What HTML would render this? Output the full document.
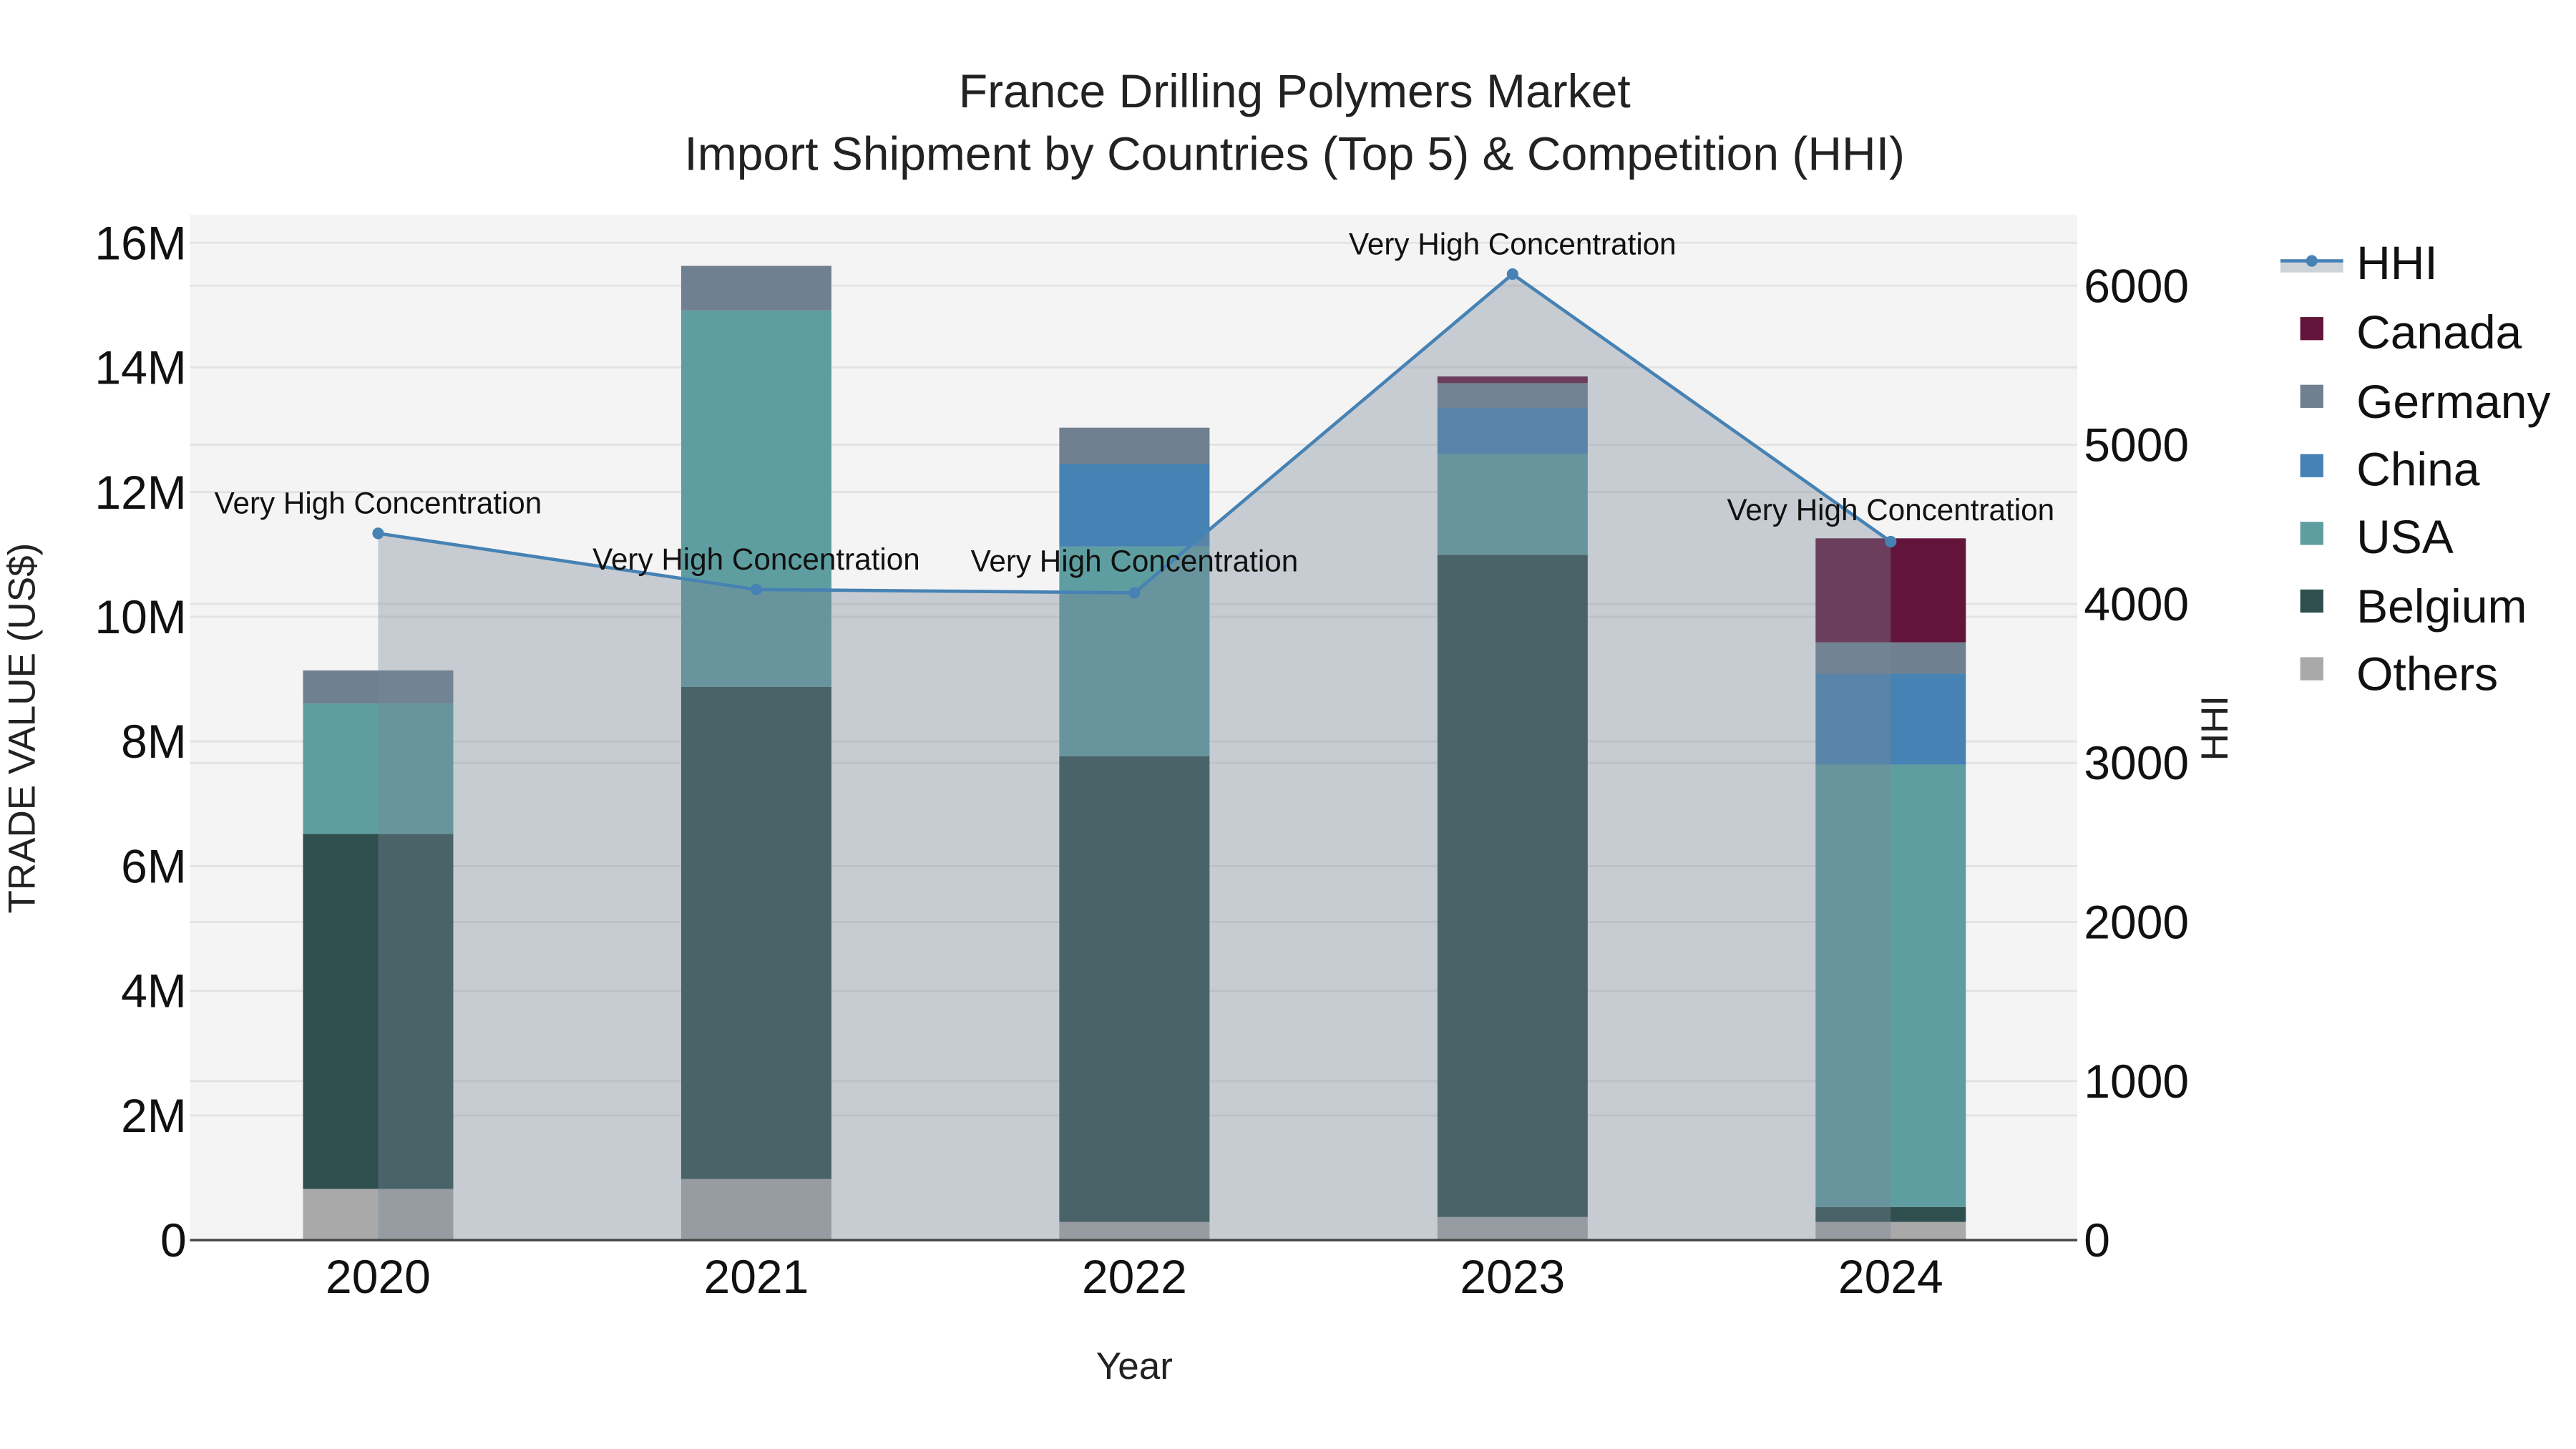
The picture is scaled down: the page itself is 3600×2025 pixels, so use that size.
<!DOCTYPE html>
<html><head><meta charset="utf-8"><style>html,body{margin:0;padding:0;background:#fff}svg{display:block}</style></head>
<body>
<svg width="3600" height="2025" viewBox="0 0 1560 877.5" xmlns="http://www.w3.org/2000/svg" font-family="'Liberation Sans', sans-serif">
<rect x="0" y="0" width="1560" height="877.5" fill="#fff"/>
<rect x="115" y="130" width="1143" height="621" fill="#f4f4f4"/>
<g stroke="#e2e2e2" stroke-width="1.2">
<line x1="115" x2="1258" y1="147" y2="147"/><line x1="115" x2="1258" y1="222.5" y2="222.5"/><line x1="115" x2="1258" y1="298" y2="298"/><line x1="115" x2="1258" y1="373.5" y2="373.5"/><line x1="115" x2="1258" y1="449" y2="449"/><line x1="115" x2="1258" y1="524.5" y2="524.5"/><line x1="115" x2="1258" y1="600" y2="600"/><line x1="115" x2="1258" y1="675.5" y2="675.5"/>
<line x1="115" x2="1258" y1="173" y2="173"/><line x1="115" x2="1258" y1="269.3" y2="269.3"/><line x1="115" x2="1258" y1="365.7" y2="365.7"/><line x1="115" x2="1258" y1="462" y2="462"/><line x1="115" x2="1258" y1="558.3" y2="558.3"/><line x1="115" x2="1258" y1="654.7" y2="654.7"/>
</g>
<g>
<rect x="183.5" y="720" width="91" height="31" fill="#a9a9a9"/>
<rect x="183.5" y="505" width="91" height="215" fill="#2f4f4f"/>
<rect x="183.5" y="426" width="91" height="79" fill="#5f9ea0"/>
<rect x="183.5" y="406" width="91" height="20" fill="#708090"/>

<rect x="412.5" y="714" width="91" height="37" fill="#a9a9a9"/>
<rect x="412.5" y="416" width="91" height="298" fill="#2f4f4f"/>
<rect x="412.5" y="188" width="91" height="228" fill="#5f9ea0"/>
<rect x="412.5" y="161" width="91" height="27" fill="#708090"/>

<rect x="641.5" y="740" width="91" height="11" fill="#a9a9a9"/>
<rect x="641.5" y="458" width="91" height="282" fill="#2f4f4f"/>
<rect x="641.5" y="331" width="91" height="127" fill="#5f9ea0"/>
<rect x="641.5" y="281" width="91" height="50" fill="#4682b4"/>
<rect x="641.5" y="259" width="91" height="22" fill="#708090"/>

<rect x="870.5" y="737" width="91" height="14" fill="#a9a9a9"/>
<rect x="870.5" y="336" width="91" height="401" fill="#2f4f4f"/>
<rect x="870.5" y="275" width="91" height="61" fill="#5f9ea0"/>
<rect x="870.5" y="247" width="91" height="28" fill="#4682b4"/>
<rect x="870.5" y="232" width="91" height="15" fill="#708090"/>
<rect x="870.5" y="228" width="91" height="4" fill="#63143a"/>

<rect x="1099.5" y="740" width="91" height="11" fill="#a9a9a9"/>
<rect x="1099.5" y="731" width="91" height="9" fill="#2f4f4f"/>
<rect x="1099.5" y="463" width="91" height="268" fill="#5f9ea0"/>
<rect x="1099.5" y="408" width="91" height="55" fill="#4682b4"/>
<rect x="1099.5" y="389" width="91" height="19" fill="#708090"/>
<rect x="1099.5" y="326" width="91" height="63" fill="#63143a"/>
</g>
<polygon points="229,751 229,323 458,357 687,359 916,166 1145,328 1145,751" fill="rgb(119,136,153)" fill-opacity="0.37"/>
<polyline points="229,323 458,357 687,359 916,166 1145,328" fill="none" stroke="#4682b4" stroke-width="2"/>
<g fill="#4682b4"><circle cx="229" cy="323" r="3.5"/><circle cx="458" cy="357" r="3.5"/><circle cx="687" cy="359" r="3.5"/><circle cx="916" cy="166" r="3.5"/><circle cx="1145" cy="328" r="3.5"/></g>
<line x1="115" x2="1258" y1="751" y2="751" stroke="#444" stroke-width="1.5"/>
<g font-size="18.3" text-anchor="middle" fill="#111">
<text x="229" y="311">Very High Concentration</text>
<text x="458" y="345">Very High Concentration</text>
<text x="687" y="346">Very High Concentration</text>
<text x="916" y="154">Very High Concentration</text>
<text x="1145" y="315">Very High Concentration</text>
</g>
<g font-size="28.6" text-anchor="middle" fill="#222">
<text x="784" y="65">France Drilling Polymers Market</text>
<text x="784" y="103">Import Shipment by Countries (Top 5) &amp; Competition (HHI)</text>
</g>
<g font-size="28.6" text-anchor="end" fill="#111">
<text x="113" y="157">16M</text><text x="113" y="232.5">14M</text><text x="113" y="308">12M</text><text x="113" y="383.5">10M</text><text x="113" y="459">8M</text><text x="113" y="534.5">6M</text><text x="113" y="610">4M</text><text x="113" y="685.5">2M</text><text x="113" y="761">0</text>
</g>
<g font-size="28.6" fill="#111">
<text x="1262" y="183">6000</text><text x="1262" y="279.3">5000</text><text x="1262" y="375.7">4000</text><text x="1262" y="472">3000</text><text x="1262" y="568.3">2000</text><text x="1262" y="664.7">1000</text><text x="1262" y="761">0</text>
</g>
<g font-size="28.6" text-anchor="middle" fill="#111">
<text x="229" y="783">2020</text><text x="458" y="783">2021</text><text x="687" y="783">2022</text><text x="916" y="783">2023</text><text x="1145" y="783">2024</text>
</g>
<text x="687" y="835" font-size="23" text-anchor="middle" fill="#222">Year</text>
<text transform="translate(21,441) rotate(-90)" font-size="23" text-anchor="middle" fill="#222">TRADE VALUE (US$)</text>
<text transform="translate(1349,441) rotate(-90)" font-size="23" text-anchor="middle" fill="#222">HHI</text>
<rect x="1381" y="159" width="38" height="6" fill="rgb(119,136,153)" fill-opacity="0.37"/>
<line x1="1381" x2="1419" y1="158" y2="158" stroke="#4682b4" stroke-width="2"/>
<circle cx="1400" cy="158" r="3.5" fill="#4682b4"/>
<rect x="1393" y="192" width="14" height="14" fill="#63143a"/>
<rect x="1393" y="233" width="14" height="14" fill="#708090"/>
<rect x="1393" y="275" width="14" height="14" fill="#4682b4"/>
<rect x="1393" y="316" width="14" height="14" fill="#5f9ea0"/>
<rect x="1393" y="357" width="14" height="14" fill="#2f4f4f"/>
<rect x="1393" y="398" width="14" height="14" fill="#a9a9a9"/>
<g font-size="28.6" fill="#111">
<text x="1427" y="169">HHI</text>
<text x="1427" y="211">Canada</text>
<text x="1427" y="253">Germany</text>
<text x="1427" y="294">China</text>
<text x="1427" y="335">USA</text>
<text x="1427" y="377">Belgium</text>
<text x="1427" y="418">Others</text>
</g>
</svg>
</body></html>
